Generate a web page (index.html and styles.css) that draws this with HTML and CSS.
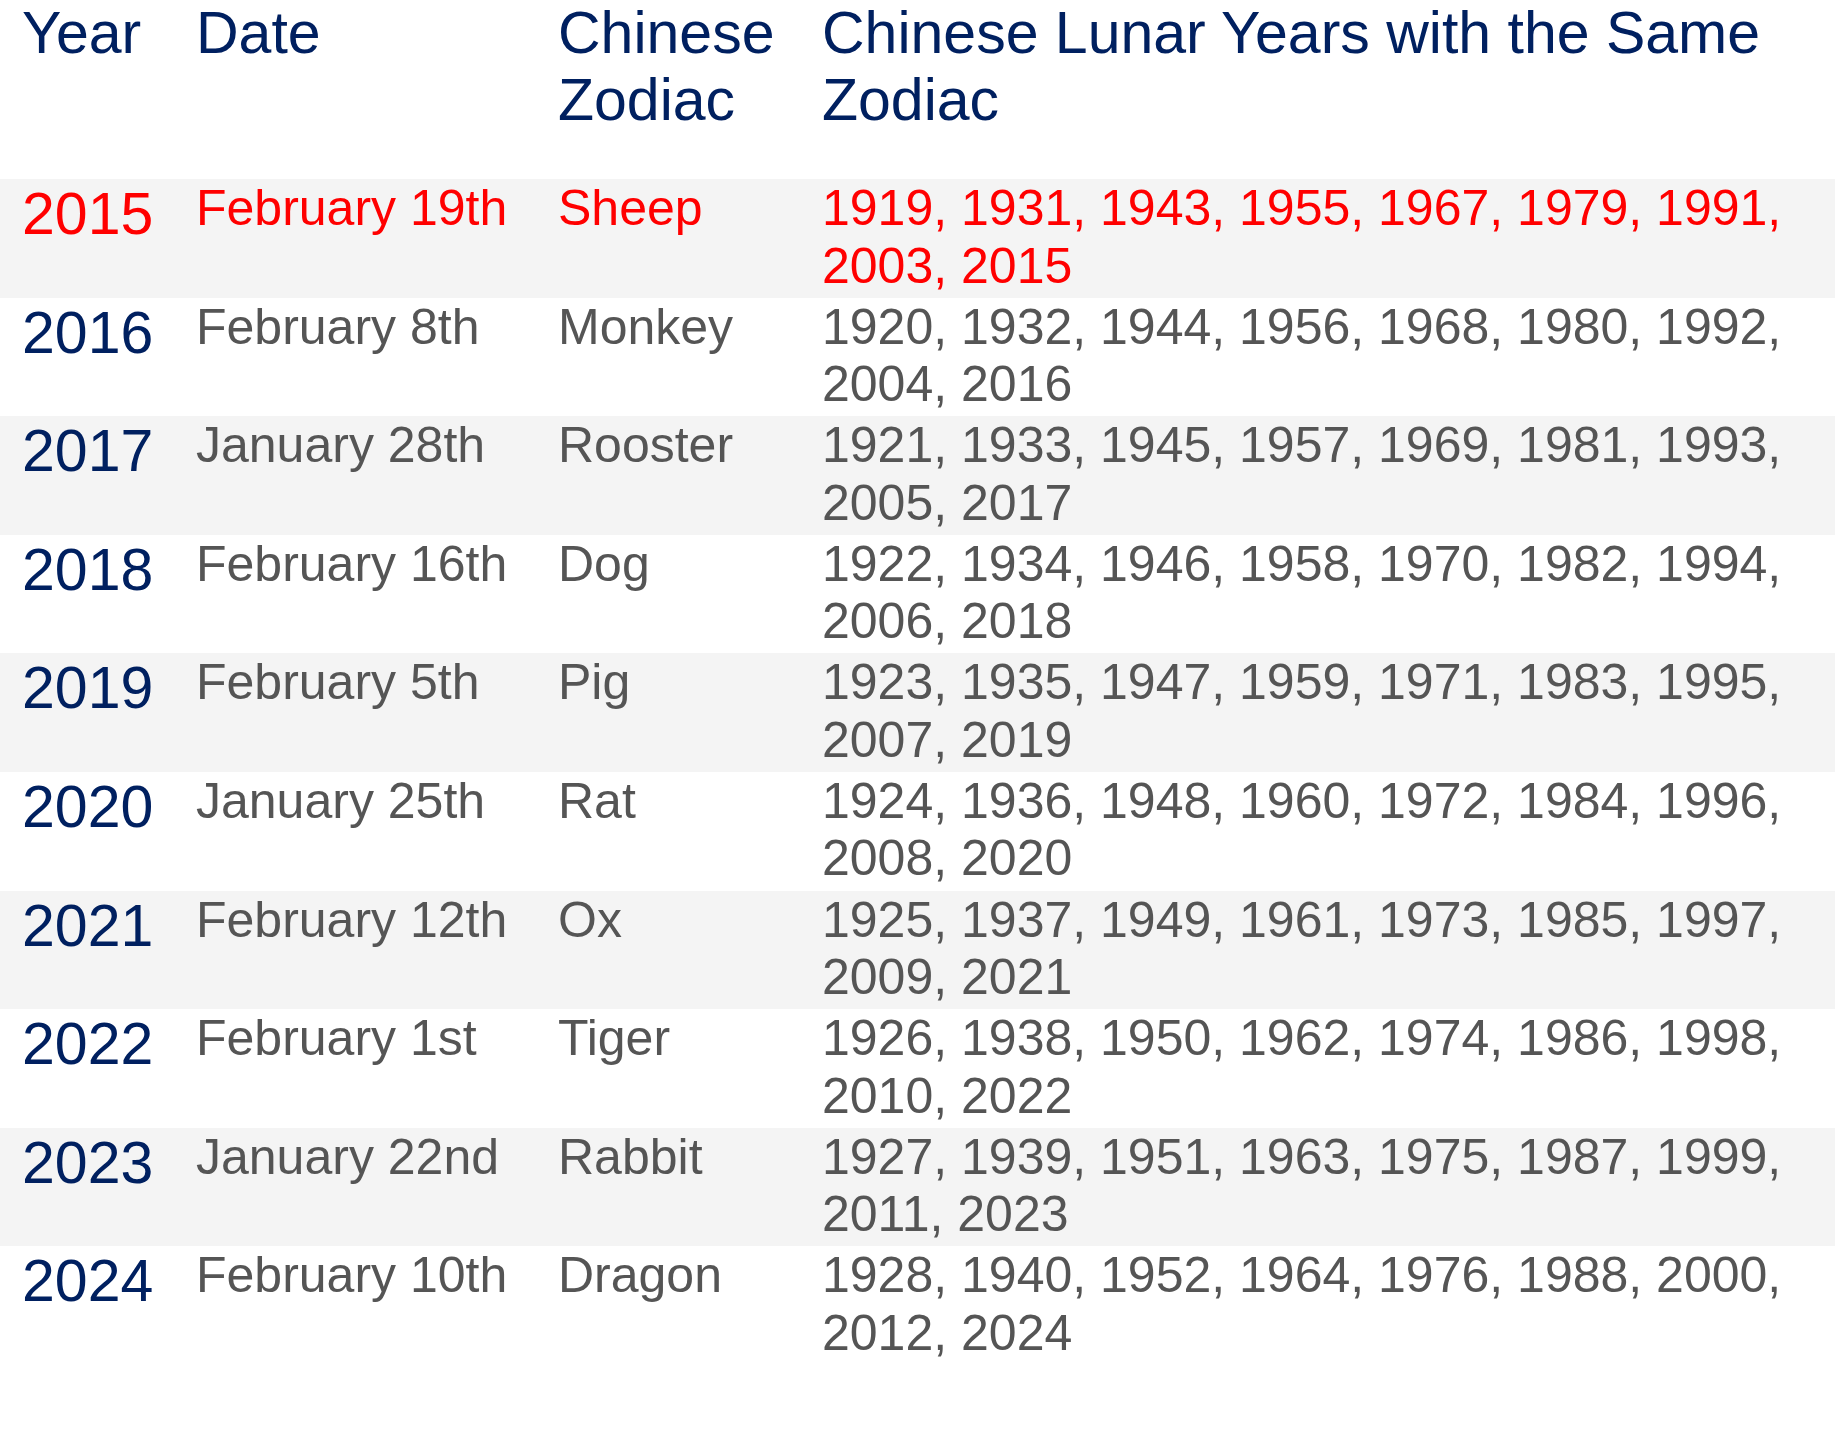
FILE: index.html
```html
<!DOCTYPE html>
<html lang="en">
<head>
<meta charset="utf-8">
<title>Chinese New Year Dates</title>
<link rel="stylesheet" href="styles.css">
</head>
<body>
<table class="zodiac-table">
  <colgroup>
    <col class="c-year">
    <col class="c-date">
    <col class="c-zodiac">
    <col class="c-years">
  </colgroup>
  <thead>
    <tr>
      <th>Year</th>
      <th>Date</th>
      <th>Chinese Zodiac</th>
      <th>Chinese Lunar Years with the Same Zodiac</th>
    </tr>
  </thead>
  <tbody>
    <tr class="current">
      <td class="year">2015</td><td>February 19th</td><td>Sheep</td><td>1919, 1931, 1943, 1955, 1967, 1979, 1991, 2003, 2015</td>
    </tr>
    <tr>
      <td class="year">2016</td><td>February 8th</td><td>Monkey</td><td>1920, 1932, 1944, 1956, 1968, 1980, 1992, 2004, 2016</td>
    </tr>
    <tr>
      <td class="year">2017</td><td>January 28th</td><td>Rooster</td><td>1921, 1933, 1945, 1957, 1969, 1981, 1993, 2005, 2017</td>
    </tr>
    <tr>
      <td class="year">2018</td><td>February 16th</td><td>Dog</td><td>1922, 1934, 1946, 1958, 1970, 1982, 1994, 2006, 2018</td>
    </tr>
    <tr>
      <td class="year">2019</td><td>February 5th</td><td>Pig</td><td>1923, 1935, 1947, 1959, 1971, 1983, 1995, 2007, 2019</td>
    </tr>
    <tr>
      <td class="year">2020</td><td>January 25th</td><td>Rat</td><td>1924, 1936, 1948, 1960, 1972, 1984, 1996, 2008, 2020</td>
    </tr>
    <tr>
      <td class="year">2021</td><td>February 12th</td><td>Ox</td><td>1925, 1937, 1949, 1961, 1973, 1985, 1997, 2009, 2021</td>
    </tr>
    <tr>
      <td class="year">2022</td><td>February 1st</td><td>Tiger</td><td>1926, 1938, 1950, 1962, 1974, 1986, 1998, 2010, 2022</td>
    </tr>
    <tr>
      <td class="year">2023</td><td>January 22nd</td><td>Rabbit</td><td>1927, 1939, 1951, 1963, 1975, 1987, 1999, 2011, 2023</td>
    </tr>
    <tr>
      <td class="year">2024</td><td>February 10th</td><td>Dragon</td><td>1928, 1940, 1952, 1964, 1976, 1988, 2000, 2012, 2024</td>
    </tr>
  </tbody>
</table>
</body>
</html>
```

FILE: styles.css
```css
html, body {
  margin: 0;
  padding: 0;
  background: #ffffff;
}

body {
  font-family: "Liberation Sans", Arial, sans-serif;
}

.zodiac-table {
  width: 100%;
  border-collapse: collapse;
  border-spacing: 0;
  table-layout: fixed;
}

.c-year { width: 196px; }
.c-date { width: 362px; }
.c-zodiac { width: 264px; }

.zodiac-table th,
.zodiac-table td {
  padding: 0;
  vertical-align: top;
  text-align: left;
}

.zodiac-table th:first-child,
.zodiac-table td:first-child {
  padding-left: 22px;
}

.zodiac-table th {
  font-weight: normal;
  font-size: 59px;
  line-height: 67px;
  color: #002060;
  height: 179px;
  box-sizing: border-box;
}

.zodiac-table td {
  font-size: 50px;
  line-height: 57.5px;
  padding-top: 1px;
  color: #555555;
  height: 118.6px;
  box-sizing: border-box;
}

.zodiac-table td.year {
  font-size: 59px;
  line-height: 57.5px;
  padding-top: 7px;
  color: #002060;
}

.zodiac-table tbody tr:nth-child(odd) {
  background: #f4f4f4;
}

.zodiac-table tr.current td {
  color: #ff0000;
}
```
